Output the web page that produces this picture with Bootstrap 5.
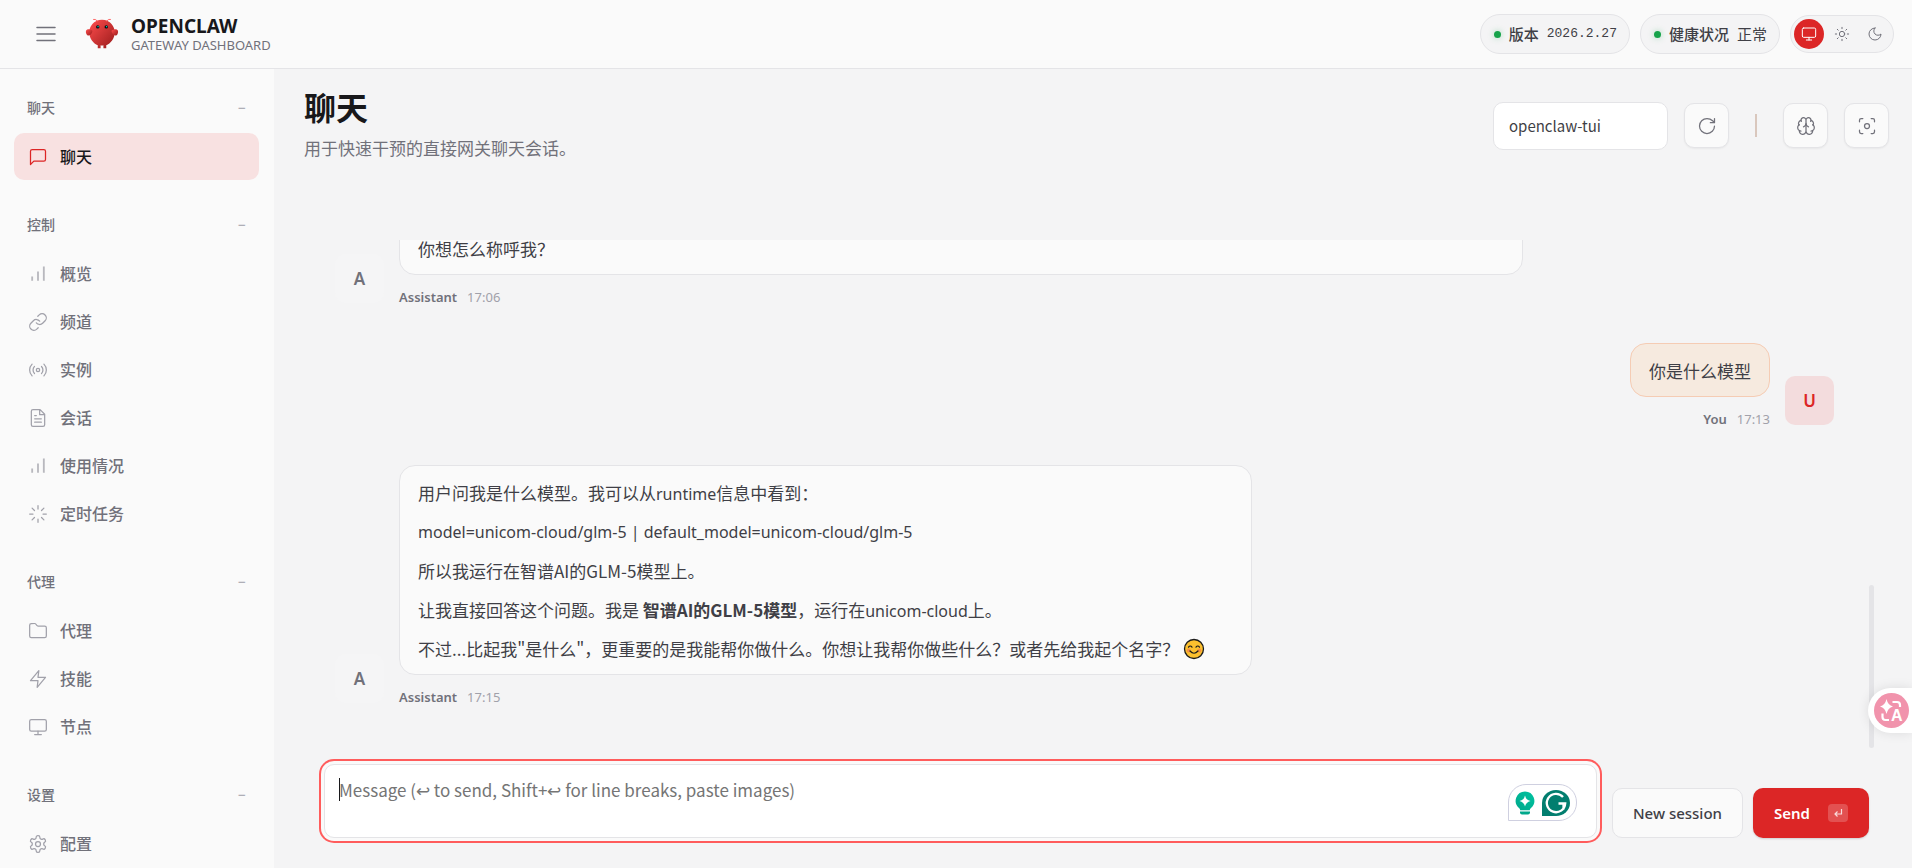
<!DOCTYPE html>
<html lang="zh-CN">
<head>
<meta charset="utf-8">
<meta name="viewport" content="width=device-width, initial-scale=1">
<title>OpenClaw</title>
<link href="https://cdn.jsdelivr.net/npm/bootstrap@5.3.0/dist/css/bootstrap.min.css" rel="stylesheet">
<style>
:root{--line:#e4e4e7;--panel:#fafafa;--muted:#71717a;--faint:#a1a1aa;--ink:#18181b;--body:#3f3f46;--accent:#dc2626}
body{font-family:"Noto Sans","Noto Sans CJK SC",sans-serif;background:#f4f4f5;color:var(--body);font-size:16px;line-height:24px}
svg{display:block;flex:none}
.ico{fill:none;stroke:currentColor;stroke-width:1.5;stroke-linecap:round;stroke-linejoin:round}
.topbar{height:69px;background:var(--panel);border-bottom:1px solid var(--line);padding:0 18px 0 23px}
.menu-btn{width:46px;height:46px;color:var(--muted)}
.brand-name{font-size:19px;line-height:22px;color:var(--ink)}
.brand-sub{font-size:13px;line-height:16px;color:var(--muted)}
.status-row{gap:10px}
.status-pill{height:40px;padding:0 12px 0 13px;gap:8px;background:#f4f4f5;border:1px solid var(--line);border-radius:20px;font-size:15px;font-weight:500}
.status-pill .mono{font-family:"Liberation Mono","Noto Sans CJK SC",monospace;font-size:13px;font-weight:400}
.status-pill .mono-cjk{font-size:15px;font-weight:400}
.dot{width:7px;height:7px;border-radius:50%;background:#16a34a;box-shadow:0 0 6px rgba(22,163,74,.35)}
.theme-group{height:38px;padding:3px;gap:3px;background:#f4f4f5;border:1px solid var(--line);border-radius:20px}
.theme-group button{width:30px;height:30px;color:var(--muted)}
.theme-group button.on{background:var(--accent);color:#fff}
.side{width:274px;flex:none;background:var(--panel);padding:22px 15px 0 14px;overflow:hidden}
.side-group{margin-bottom:28px}
.side-label{height:33px;margin-bottom:9px;padding:0 13px;font-size:14px;font-weight:500;color:var(--muted)}
.side-label .fold{color:var(--faint);font-weight:400}
.side-link{height:47px;margin-bottom:1px;padding:0 14px;gap:12px;border-radius:10px;font-weight:500;color:var(--muted);text-decoration:none}
.side-link svg{color:var(--faint)}
.side-group .side-link:last-child{margin-bottom:0}
.side-link.on{background:#f8e1e1;color:var(--ink)}
.side-link.on svg{color:var(--accent)}
.page-head{padding:20px 23px 0 30px;margin-bottom:78px}
.page-title{font-size:32px;line-height:38px;font-weight:700;color:var(--ink);margin-bottom:8px}
.page-sub{font-size:17px;line-height:27px;color:var(--muted)}
.session-box{width:175px;height:48px;border:1px solid var(--line);border-radius:10px;padding:0 15px;font-family:"Noto Sans CJK SC",sans-serif;font-size:15px;color:var(--body);background:#fff}
.tool-btn{width:45px;height:45px;border:1px solid var(--line);border-radius:10px;background:var(--panel);color:var(--muted);box-shadow:0 1px 2px rgba(0,0,0,.05)}
.tool-sep{width:2px;height:23px;margin:0 26px;background:#d9c7bd}
.thread-wrap{padding:0 38px 0 30px;min-height:0}
.thread{padding:0 35px 41px 31px;gap:36px;overflow:hidden;min-width:0}
.thumb{width:5px;height:163px;background:var(--line);border-radius:3px}
.msg{gap:15px;flex:none}
.face{width:49px;height:49px;margin-bottom:4px;border-radius:10px;font-size:17px;font-weight:600;color:var(--muted);background:#f5f5f6;flex:none}
.face.me{background:#f3dcdd;color:var(--accent)}
.bubble{background:var(--panel);border:1px solid var(--line);border-radius:16px;padding:14px 18px 12px;font-family:"Noto Sans CJK SC",sans-serif;font-size:17px;line-height:26px}
.bubble p{margin-bottom:13px}
.bubble p:last-child{margin-bottom:0}
.bubble .latin{font-family:"Noto Sans",sans-serif;font-size:16px}
.bubble span.latin{line-height:16px}
.bubble.tall{padding-right:46px}
.bubble.me{background:#f6eadf;border-color:#f5ccb4}
.wide{width:75%}
.meta{gap:10px;margin-top:12px;font-size:13px;line-height:20px;color:var(--faint)}
.meta b{font-weight:600;color:var(--muted)}
.composer{padding:16px 43px 30px 50px}
.draft{height:74px;border:1px solid var(--line);border-radius:10px;padding:12px 14px;font-family:"Noto Sans CJK SC",sans-serif;font-size:17px;line-height:26px;resize:none;background:#fff;box-shadow:0 0 0 3px var(--panel),0 0 0 5px #ff5c5c;overflow:hidden;outline:0;display:block}
.draft::placeholder{color:#757575}
.caret{left:15px;top:14px;width:1px;height:23px;background:#18181b}
.helper{right:20px;top:20px;height:37px;width:69px;background:#fff;border:1px solid #cfd0e0;border-radius:18px 18px 18px 0;gap:7px}
.act{height:50px;border-radius:10px;font-size:15px;font-weight:500}
.act-new{border:1px solid var(--line);background:var(--panel);color:var(--body);padding:0 20px;margin-left:15px;margin-right:10px}
.act-send{background:var(--accent);color:#fff;font-weight:600;border:0;padding:0 21px;gap:18px;box-shadow:0 1px 2px rgba(0,0,0,.15)}
.key{width:20px;height:18px;border-radius:4px;background:rgba(255,255,255,.2)}
.translate{right:0;top:688px;width:44px;height:45px;padding-left:6px;background:#fff;border:0;border-radius:23px 0 0 23px;box-shadow:0 0 12px rgba(0,0,0,.1)}
</style>
</head>
<body class="vh-100 d-flex flex-column overflow-hidden">
<svg width="0" height="0" class="position-absolute" aria-hidden="true">
<defs>
<symbol id="bars" viewBox="0 0 24 24"><path d="M5 20v-5M12 20V9M19 20V3" stroke-width="2.200" stroke-linecap="butt" opacity=".75"/></symbol>
<symbol id="monitor" viewBox="0 0 24 24"><rect x="2" y="3" width="20" height="14" rx="2"/><path d="M8 21h8M12 17v4"/></symbol>
</defs>
</svg>

<header class="topbar d-flex align-items-center flex-shrink-0">
  <button class="menu-btn btn p-0 border-0 d-flex align-items-center justify-content-center" aria-label="菜单">
    <svg class="ico" width="24" height="24" viewBox="0 0 24 24" stroke-width="1.5"><path d="M3 5.500h18M3 12h18M3 18.500h18"/></svg>
  </button>
  <svg class="ms-3" width="34" height="34" viewBox="0 0 120 120" aria-hidden="true">
    <defs><linearGradient id="shell" x1="0" y1="0" x2="1" y2="1"><stop offset="0" stop-color="#ff4d4d"/><stop offset="1" stop-color="#991b1b"/></linearGradient></defs>
    <g fill="url(#shell)"><path d="M60 10C30 10 15 35 15 55c0 20 15 40 30 45v10h10v-10s5 2 10 0v10h10v-10c15-5 30-25 30-45 0-20-15-45-45-45z"/><path d="M20 45C5 40 0 50 5 60c5 10 15 5 20-5 3-7 0-10-5-10z"/><path d="M100 45c15-5 20 5 15 15-5 10-15 5-20-5-3-7 0-10 5-10z"/></g>
    <path d="M45 15Q35 5 30 8M75 15Q85 5 90 8" fill="none" stroke="#ff4d4d" stroke-width="3" stroke-linecap="round"/>
    <circle cx="45" cy="35" r="6" fill="#050810"/><circle cx="75" cy="35" r="6" fill="#050810"/><circle cx="46" cy="34" r="2.500" fill="#00e5cc"/><circle cx="76" cy="34" r="2.500" fill="#00e5cc"/>
  </svg>
  <div class="ms-2 ps-1">
    <div class="brand-name fw-bold">OPENCLAW</div>
    <div class="brand-sub">GATEWAY DASHBOARD</div>
  </div>
  <div class="status-row ms-auto d-flex align-items-center">
    <div class="status-pill d-flex align-items-center"><span class="dot"></span><span>版本</span><span class="mono">2026.2.27</span></div>
    <div class="status-pill d-flex align-items-center"><span class="dot"></span><span>健康状况</span><span class="mono-cjk">正常</span></div>
    <div class="theme-group d-flex align-items-center" role="group" aria-label="主题">
      <button class="on btn p-0 border-0 rounded-circle d-flex align-items-center justify-content-center" aria-label="跟随系统"><svg class="ico" width="16" height="16"><use href="#monitor"/></svg></button>
      <button class="btn p-0 border-0 rounded-circle d-flex align-items-center justify-content-center" aria-label="浅色"><svg class="ico" width="16" height="16" viewBox="0 0 24 24"><circle cx="12" cy="12" r="4"/><path d="M12 2v2M12 20v2M4.900 4.900l1.400 1.400M17.700 17.700l1.400 1.400M2 12h2M20 12h2M6.300 17.700l-1.400 1.400M19.100 4.900l-1.400 1.400"/></svg></button>
      <button class="btn p-0 border-0 rounded-circle d-flex align-items-center justify-content-center" aria-label="深色"><svg class="ico" width="16" height="16" viewBox="0 0 24 24"><path d="M12 3a6 6 0 0 0 9 9 9 9 0 1 1-9-9Z"/></svg></button>
    </div>
  </div>
</header>

<div class="d-flex flex-grow-1" style="min-height:0">
  <nav class="side" aria-label="主导航">
    <div class="side-group">
      <div class="side-label d-flex align-items-center justify-content-between"><span>聊天</span><span class="fold">−</span></div>
      <a href="#" class="side-link on d-flex align-items-center" aria-current="page"><svg class="ico" width="20" height="20" viewBox="0 0 24 24"><path d="M21 15a2 2 0 0 1-2 2H7l-4 4V5a2 2 0 0 1 2-2h14a2 2 0 0 1 2 2z"/></svg>聊天</a>
    </div>
    <div class="side-group">
      <div class="side-label d-flex align-items-center justify-content-between"><span>控制</span><span class="fold">−</span></div>
      <a href="#" class="side-link d-flex align-items-center"><svg class="ico" width="20" height="20"><use href="#bars"/></svg>概览</a>
      <a href="#" class="side-link d-flex align-items-center"><svg class="ico" width="20" height="20" viewBox="0 0 24 24"><path d="M10 13a5 5 0 0 0 7.540.540l3-3a5 5 0 0 0-7.070-7.070l-1.720 1.710"/><path d="M14 11a5 5 0 0 0-7.540-.540l-3 3a5 5 0 0 0 7.070 7.070l1.710-1.710"/></svg>频道</a>
      <a href="#" class="side-link d-flex align-items-center"><svg class="ico" width="20" height="20" viewBox="0 0 24 24"><circle cx="12" cy="12" r="2"/><path d="M4.900 19.100C1 15.200 1 8.800 4.900 4.900M7.800 16.200c-2.300-2.300-2.300-6.100 0-8.500M16.200 7.800c2.300 2.300 2.300 6.100 0 8.500M19.100 4.900C23 8.800 23 15.100 19.100 19"/></svg>实例</a>
      <a href="#" class="side-link d-flex align-items-center"><svg class="ico" width="20" height="20" viewBox="0 0 24 24"><path d="M14.500 2H6a2 2 0 0 0-2 2v16a2 2 0 0 0 2 2h12a2 2 0 0 0 2-2V7.500L14.500 2zM14 2v6h6M16 13H8M16 17H8M10 9H8"/></svg>会话</a>
      <a href="#" class="side-link d-flex align-items-center"><svg class="ico" width="20" height="20"><use href="#bars"/></svg>使用情况</a>
      <a href="#" class="side-link d-flex align-items-center"><svg class="ico" width="20" height="20" viewBox="0 0 24 24"><path d="M12 2v4M12 18v4M4.930 4.930l2.830 2.830M16.240 16.240l2.830 2.830M2 12h4M18 12h4M4.930 19.070l2.830-2.830M16.240 7.760l2.830-2.830"/></svg>定时任务</a>
    </div>
    <div class="side-group">
      <div class="side-label d-flex align-items-center justify-content-between"><span>代理</span><span class="fold">−</span></div>
      <a href="#" class="side-link d-flex align-items-center"><svg class="ico" width="20" height="20" viewBox="0 0 24 24"><path d="M4 20h16a2 2 0 0 0 2-2V8a2 2 0 0 0-2-2h-7.930a2 2 0 0 1-1.660-.900l-.820-1.200A2 2 0 0 0 7.930 3H4a2 2 0 0 0-2 2v13c0 1.100.900 2 2 2Z"/></svg>代理</a>
      <a href="#" class="side-link d-flex align-items-center"><svg class="ico" width="20" height="20" viewBox="0 0 24 24"><path d="M13 2 3 14h9l-1 8 10-12h-9l1-8z"/></svg>技能</a>
      <a href="#" class="side-link d-flex align-items-center"><svg class="ico" width="20" height="20"><use href="#monitor"/></svg>节点</a>
    </div>
    <div class="side-group">
      <div class="side-label d-flex align-items-center justify-content-between"><span>设置</span><span class="fold">−</span></div>
      <a href="#" class="side-link d-flex align-items-center"><svg class="ico" width="20" height="20" viewBox="0 0 24 24"><path d="M12.220 2h-.440a2 2 0 0 0-2 2v.180a2 2 0 0 1-1 1.730l-.430.250a2 2 0 0 1-2 0l-.150-.080a2 2 0 0 0-2.730.730l-.220.380a2 2 0 0 0 .730 2.730l.150.100a2 2 0 0 1 1 1.720v.510a2 2 0 0 1-1 1.740l-.150.090a2 2 0 0 0-.730 2.730l.220.380a2 2 0 0 0 2.730.730l.150-.080a2 2 0 0 1 2 0l.430.250a2 2 0 0 1 1 1.730V20a2 2 0 0 0 2 2h.440a2 2 0 0 0 2-2v-.180a2 2 0 0 1 1-1.730l.430-.250a2 2 0 0 1 2 0l.150.080a2 2 0 0 0 2.730-.730l.220-.390a2 2 0 0 0-.730-2.730l-.150-.080a2 2 0 0 1-1-1.740v-.500a2 2 0 0 1 1-1.740l.150-.090a2 2 0 0 0 .730-2.730l-.220-.380a2 2 0 0 0-2.730-.730l-.150.080a2 2 0 0 1-2 0l-.430-.250a2 2 0 0 1-1-1.730V4a2 2 0 0 0-2-2z"/><circle cx="12" cy="12" r="3"/></svg>配置</a>
    </div>
  </nav>

  <main class="flex-grow-1 d-flex flex-column" style="min-width:0">
    <div class="page-head d-flex align-items-center justify-content-between">
      <div>
        <h1 class="page-title">聊天</h1>
        <div class="page-sub">用于快速干预的直接网关聊天会话。</div>
      </div>
      <div class="d-flex align-items-center">
        <input class="session-box" type="text" value="openclaw-tui" aria-label="会话">
        <button class="tool-btn btn p-0 d-flex align-items-center justify-content-center ms-3" aria-label="刷新"><svg class="ico" width="20" height="20" viewBox="0 0 24 24"><path d="M21 12a9 9 0 1 1-9-9c2.520 0 4.930 1 6.740 2.740L21 8M21 3v5h-5"/></svg></button>
        <span class="tool-sep"></span>
        <button class="tool-btn btn p-0 d-flex align-items-center justify-content-center" aria-label="思考"><svg class="ico" width="20" height="20" viewBox="0 0 24 24"><path d="M12 5a3 3 0 1 0-5.997.125 4 4 0 0 0-2.526 5.770 4 4 0 0 0 .556 6.588A4 4 0 1 0 12 18ZM12 5a3 3 0 1 1 5.997.125 4 4 0 0 1 2.526 5.770 4 4 0 0 1-.556 6.588A4 4 0 1 1 12 18Z"/><path d="M15 13a4.500 4.500 0 0 1-3-4 4.500 4.500 0 0 1-3 4M17.599 6.500a3 3 0 0 0 .399-1.375M6.003 5.125A3 3 0 0 0 6.401 6.500M3.477 10.896a4 4 0 0 1 .585-.396M19.938 10.500a4 4 0 0 1 .585.396M6 18a4 4 0 0 1-1.967-.516M19.967 17.484A4 4 0 0 1 18 18"/></svg></button>
        <button class="tool-btn btn p-0 d-flex align-items-center justify-content-center ms-3" aria-label="专注"><svg class="ico" width="20" height="20" viewBox="0 0 24 24"><path d="M3 7V5a2 2 0 0 1 2-2h2M17 3h2a2 2 0 0 1 2 2v2M21 17v2a2 2 0 0 1-2 2h-2M7 21H5a2 2 0 0 1-2-2v-2"/><circle cx="12" cy="12" r="3"/></svg></button>
      </div>
    </div>

    <div class="thread-wrap d-flex flex-grow-1">
      <div class="thread d-flex flex-column justify-content-end flex-grow-1">
        <div class="msg d-flex align-items-end">
          <div class="face d-flex align-items-center justify-content-center">A</div>
          <div class="wide">
            <div class="bubble">你想怎么称呼我？</div>
            <div class="meta d-flex"><b>Assistant</b><span>17:06</span></div>
          </div>
        </div>
        <div class="msg d-flex align-items-end justify-content-end">
          <div>
            <div class="bubble me">你是什么模型</div>
            <div class="meta d-flex justify-content-end"><b>You</b><span>17:13</span></div>
          </div>
          <div class="face me d-flex align-items-center justify-content-center">U</div>
        </div>
        <div class="msg d-flex align-items-end">
          <div class="face d-flex align-items-center justify-content-center">A</div>
          <div>
            <div class="bubble tall">
              <p>用户问我是什么模型。我可以从<span class="latin">runtime</span>信息中看到：</p>
              <p class="latin">model=unicom-cloud/glm-5 | default_model=unicom-cloud/glm-5</p>
              <p>所以我运行在智谱AI的GLM-5模型上。</p>
              <p>让我直接回答这个问题。我是 <strong>智谱AI的GLM-5模型</strong>，运行在<span class="latin">unicom-cloud</span>上。</p>
              <p class="d-flex align-items-center">不过...比起我"是什么"，更重要的是我能帮你做什么。你想让我帮你做些什么？或者先给我起个名字？
                <svg class="ms-1" width="22" height="22" viewBox="0 0 22 22" role="img" aria-label="微笑"><circle cx="11" cy="11" r="9.500" fill="#fcc02e" stroke="#1c1c1c" stroke-width="1.300"/><g fill="#f5804f" opacity=".75"><circle cx="5.700" cy="12.500" r="2"/><circle cx="16.300" cy="12.500" r="2"/></g><path d="M5.500 9.200Q7.200 6.800 9 9.200M13 9.200Q14.800 6.800 16.500 9.200M7 13Q11 17.500 15 13" fill="none" stroke="#1c1c1c" stroke-width="1.200" stroke-linecap="round"/></svg>
              </p>
            </div>
            <div class="meta d-flex"><b>Assistant</b><span>17:15</span></div>
          </div>
        </div>
      </div>
      <div class="thumb align-self-end"></div>
    </div>

    <form class="composer d-flex align-items-end">
      <div class="position-relative flex-grow-1">
        <textarea class="draft w-100" aria-label="Message" placeholder="Message (↩ to send, Shift+↩ for line breaks, paste images)"></textarea>
        <span class="caret position-absolute"></span>
        <div class="helper position-absolute d-flex align-items-center justify-content-center">
          <svg width="20" height="24" viewBox="0 0 20 24"><defs><linearGradient id="bulb" x1="0" y1="1" x2="1" y2="0"><stop offset="0" stop-color="#00a88b"/><stop offset="1" stop-color="#00c2a0"/></linearGradient></defs><path d="M10 .500a9.300 9.300 0 0 0-6 16.400c.700.600 1.200 1.500 1.200 2.400h9.600c0-.900.500-1.800 1.200-2.400A9.300 9.300 0 0 0 10 .500Z" fill="url(#bulb)"/><path d="M10 4.500q1 4.500 5.500 5.500-4.500 1-5.500 5.500-1-4.500-5.500-5.500 4.500-1 5.500-5.500z" fill="#fff"/><path d="M5 20.500h10v1a2 2 0 0 1-2 2H7a2 2 0 0 1-2-2z" fill="#00a88b"/></svg>
          <svg width="28" height="26" viewBox="0 0 28 26"><path d="M0 26V13A14 13 0 0 1 28 13 14 13 0 0 1 14 26Z" fill="#027e6f"/><path d="M21 7A9.200 9.200 0 1 0 23.200 13.500H16.500M21.500 14V19.500" fill="none" stroke="#fff" stroke-width="2.300"/></svg>
        </div>
      </div>
      <button type="button" class="act act-new btn flex-shrink-0">New session</button>
      <button type="button" class="act act-send btn flex-shrink-0 d-flex align-items-center">Send
        <span class="key d-flex align-items-center justify-content-center"><svg width="10" height="10" viewBox="0 0 10 10" fill="none" stroke="#fff" stroke-width="1.200" opacity=".8"><path d="M8.500 1v5H2M4.500 3.500 2 6l2.500 2.500"/></svg></span>
      </button>
    </form>
  </main>
</div>

<button class="translate position-absolute d-flex align-items-center" aria-label="翻译">
  <svg width="35" height="35" viewBox="0 0 35 35"><circle cx="17.500" cy="17.500" r="17.500" fill="#f193ac"/><path d="M12.500 6q1.300 6.200 6.500 7.500-5.200 1.300-6.500 7.500-1.300-6.200-6.500-7.500 5.200-1.300 6.500-7.500z" fill="#fff"/><path d="M18.500 9h4.500a3 3 0 0 1 3 3v2M8.500 20.500V24a3 3 0 0 0 3 3H15" fill="none" stroke="#fff" stroke-width="2.200"/><text x="17" y="28" font-family="Liberation Sans, sans-serif" font-weight="700" font-size="16" fill="#fff">A</text></svg>
</button>
<script src="https://cdn.jsdelivr.net/npm/bootstrap@5.3.0/dist/js/bootstrap.bundle.min.js"></script>
</body>
</html>
